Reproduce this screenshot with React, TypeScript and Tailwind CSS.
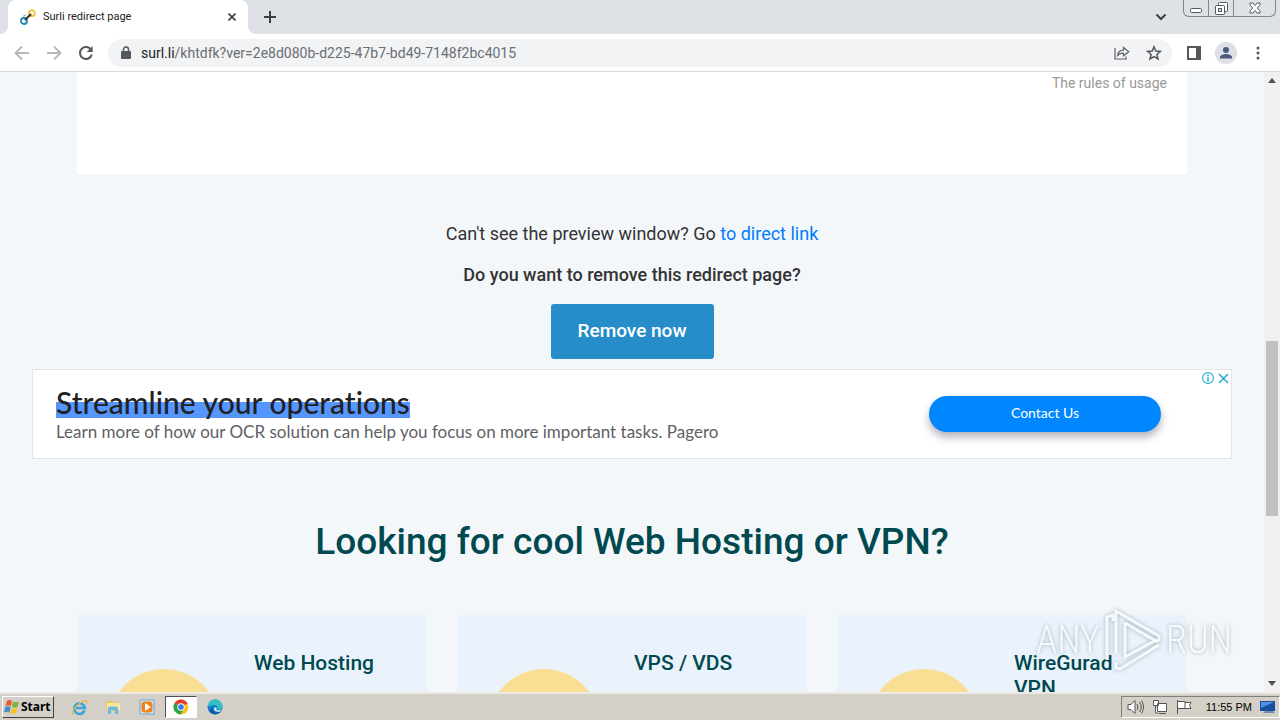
import type { ReactNode } from "react";

const CARDS = ["Web Hosting", "VPS / VDS", "WireGurad VPN"];

function LinkIcon() {
  return (
    <svg width="16" height="16" viewBox="0 0 16 16" fill="none" aria-hidden="true">
      <circle cx="11.8" cy="4.2" r="3" stroke="#f2c230" strokeWidth="1.8" />
      <circle cx="4" cy="12" r="3" stroke="#1d86b5" strokeWidth="1.8" />
      <path d="M5.500 10.500 10.500 5.500" stroke="#35342b" strokeWidth="2" strokeLinecap="round" />
      <path d="M3 7.500 6 5.500" stroke="#7cc4e0" strokeWidth="1.200" />
    </svg>
  );
}

function TabStrip() {
  return (
    <header className="flex h-[34px] shrink-0 bg-[#dee1e6] text-[#3c4043]">
      <div className="flex w-2 bg-white">
        <span className="w-2 rounded-br-lg bg-[#dee1e6]" />
      </div>
      <div className="flex w-[240px] items-center rounded-t-lg bg-white pr-2 pl-3">
        <LinkIcon />
        <span className="ml-[7px] flex-1 font-['Roboto',sans-serif] text-[11px] text-[#202124]">Surli redirect page</span>
        <button type="button" aria-label="Close tab" className="p-1">
          <svg width="8" height="8" viewBox="0 0 8 8" stroke="#3c4043" strokeWidth="1.6" aria-hidden="true">
            <path d="m0.5 0.5 7 7M7.5 0.5l-7 7" />
          </svg>
        </button>
      </div>
      <div className="flex w-2 bg-white">
        <span className="w-2 rounded-bl-lg bg-[#dee1e6]" />
      </div>
      <button type="button" aria-label="New tab" className="ml-2 self-center">
        <svg width="12" height="12" viewBox="0 0 12 12" stroke="#3c4043" strokeWidth="2" aria-hidden="true">
          <path d="M6 0v12M0 6h12" />
        </svg>
      </button>
      <button type="button" aria-label="Search tabs" className="mr-4 ml-auto self-center">
        <svg width="12" height="8" viewBox="0 0 12 8" fill="none" stroke="#3c4043" strokeWidth="2" aria-hidden="true">
          <path d="m1.5 1.5 4.5 4.5 4.5-4.5" />
        </svg>
      </button>
      <div className="mr-1 flex h-[17px] rounded-b-md border border-t-0 border-[#84868b]">
        <button type="button" aria-label="Minimize" className="flex w-6 items-end justify-center pb-[3px]">
          <svg width="12" height="6" viewBox="0 0 12 6" aria-hidden="true">
            <rect x="0.5" y="1.5" width="11" height="4" rx="1" fill="#fff" stroke="#54575c" />
          </svg>
        </button>
        <button
          type="button"
          aria-label="Restore"
          className="flex w-[26px] items-center justify-center border-x border-[#84868b]"
        >
          <svg width="13" height="13" viewBox="0 0 13 13" fill="#fff" stroke="#54575c" aria-hidden="true">
            <rect x="3.5" y="0.5" width="9" height="9" rx="1" />
            <rect x="0.5" y="3.5" width="9" height="9" rx="1" />
            <rect x="3.5" y="6.5" width="3" height="3" fill="#dee1e6" />
          </svg>
        </button>
        <button type="button" aria-label="Close window" className="flex w-[41px] items-center justify-center">
          <svg width="12" height="12" viewBox="0 0 12 12" fill="#fff" stroke="#54575c" aria-hidden="true">
            <path d="M1 1h3l2 2.5L8 1h3v2L8.300 6 11 9v2H8L6 8.500 4 11H1V9l2.700-3L1 3z" />
          </svg>
        </button>
      </div>
    </header>
  );
}

function Toolbar() {
  return (
    <nav className="flex h-[38px] shrink-0 items-center border-b border-[#d8dadd] bg-white pr-5 pl-[14px]">
      <button type="button" aria-label="Back" className="w-8">
        <svg width="16" height="16" viewBox="0 0 16 16" fill="none" stroke="#b4b7bb" strokeWidth="1.8" aria-hidden="true">
          <path d="M15 8H2M8 1.500 1.500 8 8 14.500" />
        </svg>
      </button>
      <button type="button" aria-label="Forward" className="w-8">
        <svg width="16" height="16" viewBox="0 0 16 16" fill="none" stroke="#b4b7bb" strokeWidth="1.8" aria-hidden="true">
          <path d="M1 8h13M8 1.500 14.500 8 8 14.500" />
        </svg>
      </button>
      <button type="button" aria-label="Reload" className="w-[30px]">
        <svg width="16" height="16" viewBox="0 0 16 16" aria-hidden="true">
          <path d="M13.200 5A6 6 0 1 0 13.800 9.500" fill="none" stroke="#54575b" strokeWidth="2" />
          <path d="M14.700 1v6H8.700z" fill="#54575b" />
        </svg>
      </button>
      <div className="flex h-7 flex-1 items-center rounded-full bg-[#f1f3f4] pr-[10px] pl-3">
        <svg width="12" height="14" viewBox="0 0 12 14" aria-hidden="true">
          <rect x="1" y="5" width="10" height="8" rx="1" fill="#54575b" />
          <path d="M3.500 5.500V3.500a2.500 2.500 0 0 1 5 0v2" fill="none" stroke="#54575b" strokeWidth="1.5" />
        </svg>
        <p className="ml-[9px] flex-1 font-['Roboto',sans-serif] text-sm text-[#6b6e73]">
          <span className="text-[#202124]">surl.li</span>/khtdfk?ver=2e8d080b-d225-47b7-bd49-7148f2bc4015
        </p>
        <button type="button" aria-label="Share" className="w-8">
          <svg width="16" height="16" viewBox="0 0 16 16" fill="none" stroke="#5f6368" strokeWidth="1.200" aria-hidden="true">
            <path d="M1 3v11h11v-2.500" />
            <path d="M3.500 10.500C4 7 6.500 5.300 9.500 5.200V2.500L14.800 6.700 9.500 10.800V8.200C7 8.200 5 9 3.500 10.500z" />
          </svg>
        </button>
        <button type="button" aria-label="Bookmark">
          <svg width="16" height="16" viewBox="0 0 16 16" fill="none" stroke="#54575b" strokeWidth="1.500" aria-hidden="true">
            <path d="m8 1.800 1.800 4.200 4.600.4-3.500 3 1.100 4.500L8 11.500l-4 2.400 1.100-4.500-3.500-3L6.200 6z" />
          </svg>
        </button>
      </div>
      <button type="button" aria-label="Side panel" className="ml-[15px]">
        <svg width="14" height="14" viewBox="0 0 14 14" aria-hidden="true">
          <rect x="1" y="1" width="12" height="12" fill="#fff" stroke="#54575b" strokeWidth="2" />
          <path d="M9 1h4v12H9z" fill="#54575b" />
        </svg>
      </button>
      <button type="button" aria-label="Profile" className="ml-[14px]">
        <svg width="22" height="22" viewBox="0 0 22 22" aria-hidden="true">
          <circle cx="11" cy="11" r="11" fill="#dcdfe4" />
          <circle cx="11" cy="8" r="3" fill="#4b5a7c" />
          <path d="M5 16.500v-1.500c0-2 4-3 6-3s6 1 6 3v1.500z" fill="#4b5a7c" />
        </svg>
      </button>
      <button type="button" aria-label="Menu" className="ml-[19px]">
        <svg width="4" height="14" viewBox="0 0 4 14" fill="#54575b" aria-hidden="true">
          <circle cx="2" cy="2" r="1.500" />
          <circle cx="2" cy="7" r="1.500" />
          <circle cx="2" cy="12" r="1.500" />
        </svg>
      </button>
    </nav>
  );
}

function AdBanner() {
  return (
    <section className="relative mx-8 mt-[10px] flex h-[90px] items-center border border-[#e2e4e6] bg-white pr-[70px] pl-[23px] font-['Lato',sans-serif] [font-variant-ligatures:none]">
      <div className="flex-1">
        <h2 className="w-fit bg-linear-to-b from-transparent from-50% to-[#5596ff] to-50% text-3xl leading-8 font-medium text-[#212124]">
          Streamline your operations
        </h2>
        <p className="mt-1 text-[17px] leading-5 text-[#5f6063]">
          Learn more of how our OCR solution can help you focus on more important tasks. Pagero
        </p>
      </div>
      <button
        type="button"
        className="h-9 w-[232px] rounded-full bg-[#0087ff] pb-[2px] text-sm text-white shadow-[0_5px_9px_rgba(40,30,60,0.35)]"
      >
        Contact Us
      </button>
      <div className="absolute top-[2px] right-[2px] flex items-center gap-1">
        <button type="button" aria-label="Ad choices">
          <svg width="12" height="12" viewBox="0 0 12 12" fill="none" stroke="#1fa9cf" aria-hidden="true">
            <circle cx="6" cy="6" r="5.400" strokeWidth="1.100" />
            <path d="M6 5v4.500M6 2.500v1.500" strokeWidth="1.500" />
          </svg>
        </button>
        <button type="button" aria-label="Close ad">
          <svg width="11" height="11" viewBox="0 0 11 11" stroke="#1fa9cf" strokeWidth="1.500" aria-hidden="true">
            <path d="m1 1 9 9M10 1l-9 9" />
          </svg>
        </button>
      </div>
    </section>
  );
}

function Watermark() {
  return (
    <div className="absolute right-8 bottom-5 flex items-center gap-1 font-['Roboto_Condensed','Liberation_Sans_Narrow','Roboto',sans-serif] text-[38px] leading-none font-light text-white/85 drop-shadow-[0_0_2px_rgba(90,110,130,0.6)]">
      <span>ANY</span>
      <svg width="58" height="64" viewBox="0 0 58 64" fill="none" stroke="#fff" strokeOpacity="0.85" strokeWidth="3" aria-hidden="true">
        <path d="M3 52V9l6-2v6M12 46V3l43 25v4l-3 1-31-18" />
        <path d="M21 15v34l31-17M12 54v6l4 1 39-24" />
      </svg>
      <span>RUN</span>
    </div>
  );
}

function Page() {
  return (
    <main className="relative min-w-0 flex-1 overflow-hidden bg-[#f3f7fa] font-['Roboto',sans-serif]">
      <div className="mx-auto h-[102px] max-w-[1110px] bg-white px-5 text-right text-sm leading-[22px]">
        <a href="#rules" className="text-[#999]">
          The rules of usage
        </a>
      </div>
      <div className="mt-[46px] flex flex-col items-center text-lg text-[#333]">
        <p>
          Can't see the preview window? Go{" "}
          <a href="#direct" className="text-[#007bff]">
            to direct link
          </a>
        </p>
        <p className="mt-[13px] font-medium">Do you want to remove this redirect page?</p>
        <button
          type="button"
          className="mt-[15px] h-[55px] rounded-[3px] bg-[#278dc8] px-[27px] pb-[2px] text-[19px] font-medium text-white"
        >
          Remove now
        </button>
      </div>
      <AdBanner />
      <h1 className="mt-[60px] text-center text-[37px] leading-[46px] font-medium text-[#00494f]">
        Looking for cool Web Hosting or VPN?
      </h1>
      <div className="mx-auto mt-[50px] grid max-w-[1110px] grid-cols-3 gap-[30px]">
        {CARDS.map((title) => (
          <article key={title} className="flex h-[240px] gap-[34px] bg-[#eaf3fc] pt-9 pl-[31px]">
            <div className="mt-[18px] size-[112px] shrink-0 rounded-full bg-[#f9df94]" />
            <h3 className="w-[126px] text-[21px] leading-[25px] font-medium text-[#00494f]">{title}</h3>
          </article>
        ))}
      </div>
      <Watermark />
    </main>
  );
}

function Scrollbar() {
  return (
    <div aria-hidden="true" className="flex w-4 shrink-0 flex-col items-center bg-[#f1f1f1] py-[6px]">
      <svg width="8" height="5" viewBox="0 0 8 5" fill="#505050">
        <path d="M0 5 4 0l4 5z" />
      </svg>
      <div className="mt-[258px] h-[175px] w-3 bg-[#c1c1c1]" />
      <svg width="8" height="5" viewBox="0 0 8 5" fill="#505050" className="mt-auto">
        <path d="m0 0 4 5 4-5z" />
      </svg>
    </div>
  );
}

function TaskButton({ label, active, children }: { label: string; active?: boolean; children: ReactNode }) {
  return (
    <button
      type="button"
      aria-label={label}
      className={
        active
          ? "flex h-[22px] w-8 items-center justify-center border border-t-[#505050] border-r-white border-b-white border-l-[#505050] bg-white"
          : "flex h-[22px] w-8 items-center justify-center"
      }
    >
      {children}
    </button>
  );
}

function Taskbar() {
  return (
    <footer className="flex h-7 shrink-0 items-center border-t-2 border-[#ece9e4] bg-[#d4d0c8] pl-[2px] text-[11px] text-black">
      <button
        type="button"
        className="mr-[9px] flex h-[22px] w-[52px] items-center gap-[1px] border border-t-white border-r-[#404040] border-b-[#404040] border-l-white pl-[1px] font-['Noto_Sans',sans-serif] text-xs font-bold"
      >
        <svg width="16" height="16" viewBox="0 0 16 16" aria-hidden="true">
          <path d="M3 2q3-2 5 0L7 7Q4 5.500 1.500 7z" fill="#e8592a" />
          <path d="M9 2.500q3 1.500 6 0L13.500 8q-3 1.500-5.500 0z" fill="#7db441" />
          <path d="M1.200 8q3-1.500 5.500 0l-1.300 5.500Q3 12 0 13.500z" fill="#3f8fd4" />
          <path d="M7.700 9q3 1.500 5.500 0L12 14q-3 1.500-5.500 0z" fill="#f8c022" />
        </svg>
        Start
      </button>
      <div className="flex gap-[2px]">
        <TaskButton label="Internet Explorer">
          <svg width="17" height="17" viewBox="0 0 17 17" fill="none" aria-hidden="true">
            <path d="M13.500 11.500A5.300 5.300 0 1 1 13.800 9H4" stroke="#39a4df" strokeWidth="2.600" />
            <path d="M2 15.500C-1 13 8 3 13.500 1.800q3.500-.5 2 3" stroke="#e5b945" strokeWidth="1.300" />
          </svg>
        </TaskButton>
        <TaskButton label="File Explorer">
          <svg width="16" height="16" viewBox="0 0 16 16" aria-hidden="true">
            <path d="M1 2h5l1 1h7v9H1z" fill="#e9c766" />
            <path d="M2 4h13v7H2z" fill="#f9e7a0" />
            <path d="M3 15V9.500q0-2 2-2h6q2 0 2 2V15h-3v-4H6v4z" fill="#70b8dc" />
          </svg>
        </TaskButton>
        <TaskButton label="Media Player">
          <svg width="16" height="16" viewBox="0 0 16 16" aria-hidden="true">
            <path d="M1 1h14v14H1z" fill="#d8e9f5" stroke="#6da3cb" />
            <rect x="2.500" y="2.500" width="11" height="11" rx="3" fill="#f28118" />
            <path d="m6 4 6 4-6 4z" fill="#fff" />
          </svg>
        </TaskButton>
        <TaskButton label="Chrome" active>
          <svg width="16" height="16" viewBox="0 0 16 16" aria-hidden="true">
            <circle cx="8" cy="8" r="7.500" fill="#fbc116" />
            <path d="M8 8 1.500 4.200A7.500 7.500 0 0 1 14.500 4.300z" fill="#e33b2e" />
            <path d="M1.500 4.200A7.500 7.500 0 0 0 7.500 15.500L11 9.800 8 8z" fill="#2da14c" />
            <circle cx="8" cy="8" r="3.700" fill="#fff" />
            <circle cx="8" cy="8" r="2.800" fill="#3b7de8" />
          </svg>
        </TaskButton>
        <TaskButton label="Edge">
          <svg width="16" height="16" viewBox="0 0 16 16" aria-hidden="true">
            <circle cx="8" cy="8" r="7.500" fill="#1681cf" />
            <path d="M.5 8A7.500 7.500 0 0 1 15.500 7.500c0 3-2.500 3.500-5 3C11 8 10 6 7 6 4 6 1.500 7 .5 8z" fill="#37bfc0" />
            <path d="M6 8c-1 4 2 6.500 7.500 5A7.500 7.500 0 0 1 2 12z" fill="#15559f" />
            <path d="M9 8.500q1.200 1 0 2 2 1.500 5 .5l-1 1.500q-5 1-6-2.500 0-2 2-1.500z" fill="#e5f3f7" />
          </svg>
        </TaskButton>
      </div>
      <div className="ml-auto flex h-[22px] items-center border border-t-[#808080] border-r-white border-b-white border-l-[#808080] pr-[3px] pl-[5px]">
        <svg width="66" height="16" viewBox="0 0 66 16" fill="#fff" stroke="#555" aria-hidden="true">
          <path d="M1 5.500h3l4-4v13l-4-4H1z" />
          <path d="M10 5q2 3 0 6M12.500 3q3.500 5 0 10M14.500 1.500q4 6.500 0 13" fill="none" />
          <path d="M30.500 4.500h9v8h-9zM32 14.500h7M26.500 1.500h5v5h-5zM28.500 7v7h3" />
          <path d="M50.500 1v14M51 2.500h7v7h-7M58 3.500h6l-1.500 3 1.500 3h-6" />
        </svg>
        <time className="ml-[13px] font-['Liberation_Sans',sans-serif]">11:55 PM</time>
        <svg width="16" height="16" viewBox="0 0 16 16" className="ml-2" aria-hidden="true">
          <path d="M0 2h15v10H0z" fill="#174ea0" />
          <path d="M1 3h13L1 9z" fill="#4e91df" />
          <path d="M5 12h8l2 2H3z" fill="#758bac" />
        </svg>
      </div>
    </footer>
  );
}

export default function App() {
  return (
    <div className="flex h-screen flex-col overflow-hidden">
      <TabStrip />
      <Toolbar />
      <div className="flex min-h-0 flex-1">
        <Page />
        <Scrollbar />
      </div>
      <Taskbar />
    </div>
  );
}
